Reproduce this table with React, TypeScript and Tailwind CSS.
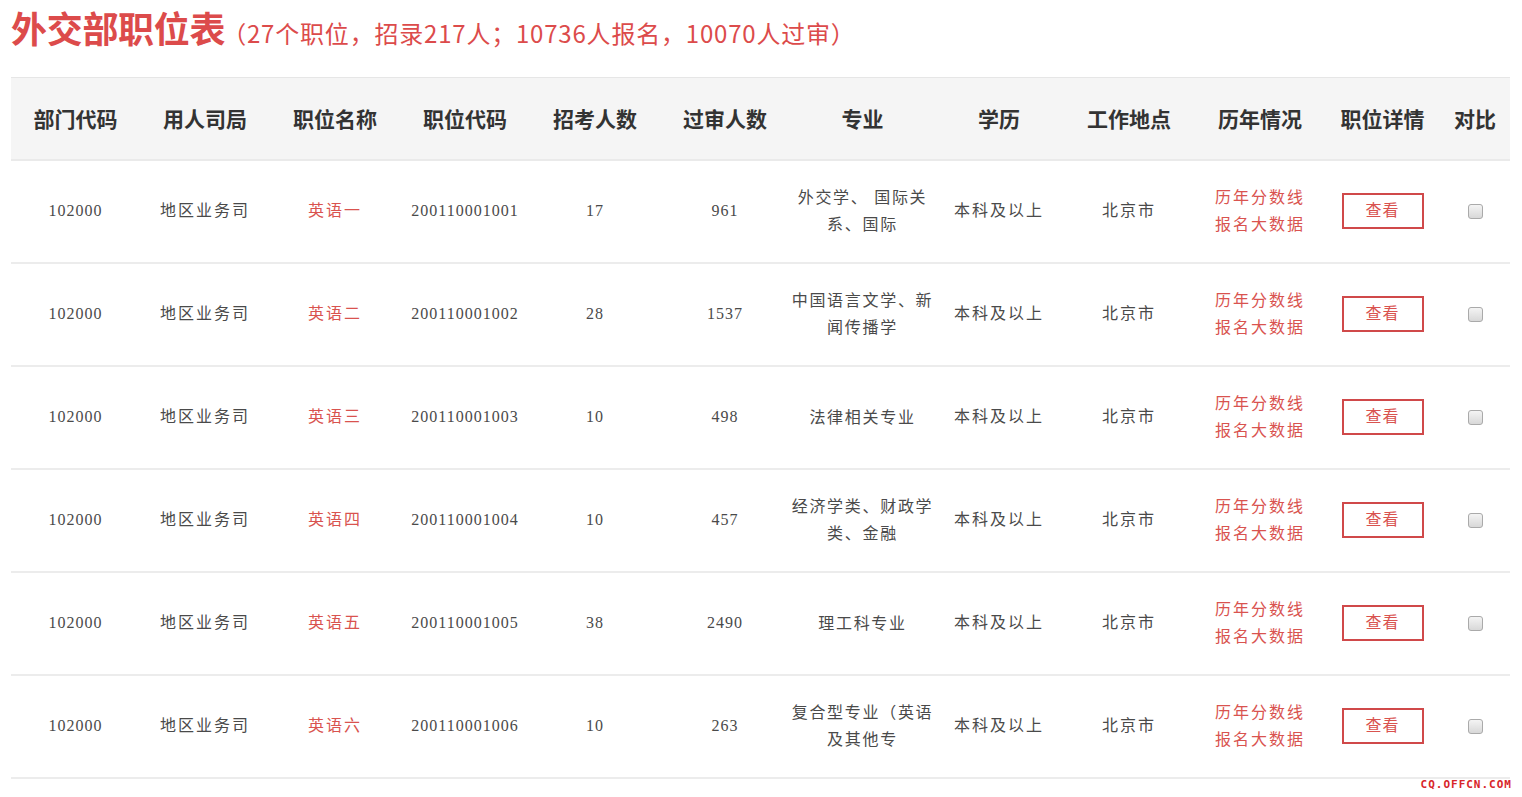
import React from 'react';

const rows = [
  { name: '英语一', code: '200110001001', quota: '17', passed: '961', major: ['外交学、 国际关', '系、国际'] },
  { name: '英语二', code: '200110001002', quota: '28', passed: '1537', major: ['中国语言文学、新', '闻传播学'] },
  { name: '英语三', code: '200110001003', quota: '10', passed: '498', major: ['法律相关专业'] },
  { name: '英语四', code: '200110001004', quota: '10', passed: '457', major: ['经济学类、财政学', '类、金融'] },
  { name: '英语五', code: '200110001005', quota: '38', passed: '2490', major: ['理工科专业'] },
  { name: '英语六', code: '200110001006', quota: '10', passed: '263', major: ['复合型专业（英语', '及其他专'] },
];

const headers = ['部门代码', '用人司局', '职位名称', '职位代码', '招考人数', '过审人数', '专业', '学历', '工作地点', '历年情况', '职位详情', '对比'];
const widths = [129, 130, 130, 130, 130, 130, 145, 128, 132, 130, 115, 70];

export default function App() {
  return (
    <div className="relative w-[1522px] h-[797px] overflow-hidden bg-white px-[11px] pt-0">
      <h1 className="flex items-baseline h-[77px] font-['Noto_Sans_CJK_SC',sans-serif] text-[#dc4b4b]">
        <span className="text-[36px] font-bold tracking-[-0.3px]">外交部职位表</span>
        <span className="-ml-[3px] text-[24px] font-normal tracking-[0.8px]">（27个职位，招录217人；10736人报名，10070人过审）</span>
      </h1>

      <table className="table-fixed border-collapse w-[1499px] text-center">
        <colgroup>
          {widths.map((w, i) => (
            <col key={i} style={{ width: w }} />
          ))}
        </colgroup>
        <thead>
          <tr className="h-[82px] bg-[#f5f5f5] border-t border-[#e6e6e6] border-b-2 border-b-[#eaeaea]">
            {headers.map((h) => (
              <th key={h} className="text-[21px] font-bold text-[#333] font-['Noto_Sans_CJK_SC',sans-serif]">
                {h}
              </th>
            ))}
          </tr>
        </thead>
        <tbody className="text-[16px] text-[#4a4a4a] font-['Liberation_Serif','Noto_Sans_CJK_SC',serif]">
          {rows.map((r) => (
            <tr key={r.code} className="h-[103px] border-b-2 border-[#ececec]">
              <td className="tracking-[1px]">102000</td>
              <td className="tracking-[2px]">地区业务司</td>
              <td className="text-[#d9534f] tracking-[2px]">{r.name}</td>
              <td className="tracking-[1px]">{r.code}</td>
              <td className="tracking-[1px]">{r.quota}</td>
              <td className="tracking-[1px]">{r.passed}</td>
              <td className="leading-[27px] tracking-[1.7px]">
                {r.major.map((m) => (
                  <div key={m}>{m}</div>
                ))}
              </td>
              <td className="tracking-[2px]">本科及以上</td>
              <td className="tracking-[2px]">北京市</td>
              <td className="text-[#d9534f] leading-[27px] tracking-[2px]">
                <div>历年分数线</div>
                <div>报名大数据</div>
              </td>
              <td>
                <div className="mx-auto w-[82px] h-[36px] border-2 border-[#d0494a] text-[#d9534f] tracking-[1px] flex items-center justify-center">
                  查看
                </div>
              </td>
              <td>
                <div className="mx-auto w-[15px] h-[15px] rounded-[3px] border border-[#aaa] bg-gradient-to-b from-[#f4f4f4] to-[#d8d8d8]" />
              </td>
            </tr>
          ))}
        </tbody>
      </table>

      <div className="absolute right-[10px] bottom-[4px] text-[11px] font-bold tracking-[1px] text-[#d8262a] font-['DejaVu_Sans_Mono',monospace]">
        CQ.OFFCN.COM
      </div>
    </div>
  );
}
